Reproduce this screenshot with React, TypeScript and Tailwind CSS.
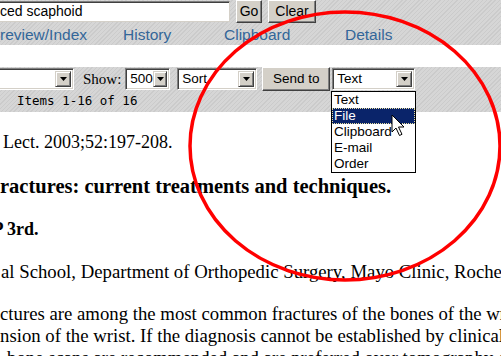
const hatch =
  "bg-[repeating-linear-gradient(135deg,#d6d6d6_0px,#d6d6d6_2px,#cbcbcb_2px,#cbcbcb_3px)]";

const ArrowBtn = () => (
  <div className="flex h-full w-[16px] items-center justify-center border border-t-[#d4d0c8] border-l-[#d4d0c8] border-r-[#404040] border-b-[#404040] bg-[#d4d0c8] shadow-[inset_1px_1px_0_#ffffff,inset_-1px_-1px_0_#808080]">
    <svg width="7" height="4" viewBox="0 0 7 4">
      <path d="M0 0h7L3.5 4z" fill="#000" />
    </svg>
  </div>
);

const Select = ({ value, className }: { value: string; className: string }) => (
  <div
    className={
      "flex items-stretch border border-t-[#808080] border-l-[#808080] border-r-white border-b-white bg-white shadow-[inset_1px_1px_0_#404040,inset_-1px_-1px_0_#d4d0c8] p-[2px] " +
      className
    }
  >
    <div className="flex-1 pl-[2px] leading-[15px] text-[13.5px] text-black">{value}</div>
    <ArrowBtn />
  </div>
);

const WinButton = ({ label, className }: { label: string; className: string }) => (
  <div
    className={
      "flex items-center justify-center border border-t-white border-l-white border-r-[#404040] border-b-[#404040] bg-[#d4d0c8] shadow-[inset_-1px_-1px_0_#808080] text-black " +
      className
    }
  >
    {label}
  </div>
);

const App = () => {
  return (
    <div className="relative h-[356px] w-[501px] overflow-hidden bg-white font-['Liberation_Sans',Arial,sans-serif]">
      {/* search bar + tabs */}
      <div className={"h-[45px] " + hatch}>
        <div className="flex h-[24px] items-start text-[14px]">
          <div className="ml-[-20px] mt-[1px] flex h-[21px] w-[250px] items-center border border-t-[#808080] border-l-[#808080] border-r-[#d4d0c8] border-b-[#d4d0c8] bg-white pl-[19px] shadow-[inset_1px_1px_0_#404040]">
            ced scaphoid
          </div>
          <WinButton label="Go" className="ml-[6px] h-[23px] w-[26px]" />
          <WinButton label="Clear" className="ml-[6px] h-[23px] w-[48px]" />
        </div>
        <div className="flex h-[21px] items-center text-[15.5px] leading-[18px] text-[#336699]">
          <div className="w-[123px]">review/Index</div>
          <div className="w-[101px]">History</div>
          <div className="w-[121px]">Clipboard</div>
          <div>Details</div>
        </div>
      </div>

      {/* display settings */}
      <div className={"mt-[22px] h-[45px] " + hatch}>
        <div className="flex h-[24px] items-center">
          <Select value="" className="ml-[-10px] h-[22px] w-[84px]" />
          <div className="ml-[9px] font-['Liberation_Serif',serif] text-[15px] text-black">Show:</div>
          <Select value="500" className="ml-[4px] h-[22px] w-[45px]" />
          <Select value="Sort" className="ml-[7px] h-[22px] w-[80px]" />
          <WinButton label="Send to" className="ml-[5px] h-[24px] w-[68px] text-[13.5px]" />
          <Select value="Text" className="ml-[2px] h-[22px] w-[83px]" />
        </div>
        <div className="flex h-[21px] items-center pl-[17px] font-['DejaVu_Sans_Mono',monospace] text-[12.5px] text-black">
          Items 1-16 of 16
        </div>
      </div>

      {/* record */}
      <div className="font-['Liberation_Serif','Times_New_Roman',serif] text-black">
        <div className="mt-[19px] pl-[3px] text-[18px] leading-[22px] whitespace-nowrap">
          Lect. 2003;52:197-208.
        </div>
        <div className="mt-[21px] text-[20.5px] font-bold leading-[24px] whitespace-nowrap">
          ractures: current treatments and techniques.
        </div>
        <div className="mt-[20px] ml-[-7.5px] text-[18px] font-bold leading-[22px] whitespace-nowrap">
          P 3rd.
        </div>
        <div className="mt-[21px] pl-[1px] text-[18.75px] leading-[22px] whitespace-nowrap">
          al School, Department of Orthopedic Surgery, Mayo Clinic, Rochester
        </div>
        <div className="mt-[20px] text-[18.75px] leading-[22px] whitespace-nowrap">
          <div>ctures are among the most common fractures of the bones of the wrist</div>
          <div>nsion of the wrist. If the diagnosis cannot be established by clinical examination</div>
          <div className="pl-[7px]">bone scans are recommended and are preferred over tomography or</div>
        </div>
      </div>

      {/* open Send to list */}
      <div className="absolute left-[331px] top-[91px] w-[85px] border border-black bg-white text-[13.5px] leading-[16px] text-black">
        <div className="h-[16px] pl-[2px]">Text</div>
        <div className="h-[16px] border border-dotted border-[#e8e0a0] bg-[#0a246a] pl-[1px] leading-[14px] text-white">File</div>
        <div className="h-[16px] pl-[2px]">Clipboard</div>
        <div className="h-[16px] pl-[2px]">E-mail</div>
        <div className="h-[16px] pl-[2px]">Order</div>
      </div>

      {/* mouse pointer */}
      <svg className="absolute left-[391px] top-[114px]" width="14" height="23" viewBox="0 0 14 23">
        <path d="M1 1v17l4-4 3.5 7.5 2.5-1.2L7.5 13H13z" fill="#fff" stroke="#000" strokeWidth="1" strokeLinejoin="round" />
      </svg>

      {/* red annotation circle */}
      <svg className="pointer-events-none absolute left-0 top-0" width="501" height="356">
        <ellipse cx="345" cy="146" rx="155" ry="134" fill="none" stroke="#ff0000" strokeWidth="3.5" />
      </svg>
    </div>
  );
};

export default App;
